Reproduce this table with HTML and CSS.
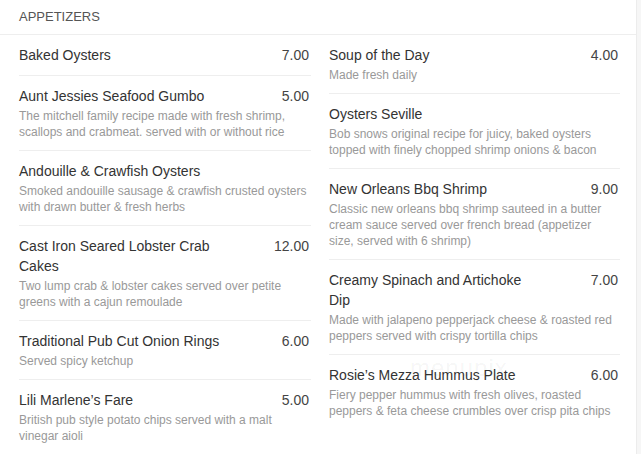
FILE: index.html
```html
<!DOCTYPE html>
<html>
<head>
<meta charset="utf-8">
<link rel="stylesheet" href="styles.css">
</head>
<body>
<div class="menu">
  <div class="section-head">APPETIZERS</div>
  <div class="cols">
    <div class="col">
      <div class="item">
        <div class="row"><div class="name">Baked Oysters</div><div class="price">7.00</div></div>
      </div>
      <div class="item">
        <div class="row"><div class="name">Aunt Jessies Seafood Gumbo</div><div class="price">5.00</div></div>
        <div class="desc">The mitchell family recipe made with fresh shrimp, scallops and crabmeat. served with or without rice</div>
      </div>
      <div class="item">
        <div class="row"><div class="name">Andouille &amp; Crawfish Oysters</div><div class="price"></div></div>
        <div class="desc">Smoked andouille sausage &amp; crawfish crusted oysters with drawn butter &amp; fresh herbs</div>
      </div>
      <div class="item">
        <div class="row"><div class="name">Cast Iron Seared Lobster Crab Cakes</div><div class="price">12.00</div></div>
        <div class="desc">Two lump crab &amp; lobster cakes served over petite greens with a cajun remoulade</div>
      </div>
      <div class="item">
        <div class="row"><div class="name">Traditional Pub Cut Onion Rings</div><div class="price">6.00</div></div>
        <div class="desc">Served spicy ketchup</div>
      </div>
      <div class="item last">
        <div class="row"><div class="name">Lili Marlene’s Fare</div><div class="price">5.00</div></div>
        <div class="desc">British pub style potato chips served with a malt vinegar aioli</div>
      </div>
    </div>
    <div class="col">
      <div class="item">
        <div class="row"><div class="name">Soup of the Day</div><div class="price">4.00</div></div>
        <div class="desc">Made fresh daily</div>
      </div>
      <div class="item">
        <div class="row"><div class="name">Oysters Seville</div><div class="price"></div></div>
        <div class="desc">Bob snows original recipe for juicy, baked oysters topped with finely chopped shrimp onions &amp; bacon</div>
      </div>
      <div class="item">
        <div class="row"><div class="name">New Orleans Bbq Shrimp</div><div class="price">9.00</div></div>
        <div class="desc">Classic new orleans bbq shrimp sauteed in a butter cream sauce served over french bread (appetizer size, served with 6 shrimp)</div>
      </div>
      <div class="item">
        <div class="row"><div class="name">Creamy Spinach and Artichoke Dip</div><div class="price">7.00</div></div>
        <div class="desc">Made with jalapeno pepperjack cheese &amp; roasted red peppers served with crispy tortilla chips</div>
      </div>
      <div class="item last">
        <div class="row"><div class="name">Rosie’s Mezza Hummus Plate</div><div class="price">6.00</div></div>
        <div class="desc">Fiery pepper hummus with fresh olives, roasted peppers &amp; feta cheese crumbles over crisp pita chips</div>
      </div>
    </div>
  </div>
  <div class="watermark">menupix</div>
</div>
</body>
</html>
```

FILE: styles.css
```css
html, body {
  margin: 0;
  padding: 0;
}
body {
  background: #f6f6f6;
  font-family: "Liberation Sans", Arial, sans-serif;
  width: 641px;
  height: 454px;
  overflow: hidden;
}
.menu {
  position: relative;
  width: 636px;
  height: 454px;
  background: #fff;
  border-right: 1px solid #ececec;
}
.section-head {
  height: 34px;
  line-height: 34px;
  padding-left: 19px;
  font-size: 13px;
  color: #555;
  border-bottom: 1px solid #eeeeee;
}
.cols {
  display: grid;
  grid-template-columns: 292px 291px;
  column-gap: 18px;
  padding: 0 16px 0 19px;
}
.item {
  padding: 10px 0;
  border-bottom: 1px solid #eeeeee;
}
.item.last {
  border-bottom: none;
}
.row {
  display: flex;
  justify-content: space-between;
  align-items: flex-start;
}
.name {
  width: 208px;
  font-size: 14px;
  line-height: 20px;
  color: #333;
}
.price {
  font-size: 14px;
  line-height: 20px;
  color: #444;
  padding-right: 2px;
}
.desc {
  margin-top: 2px;
  max-width: 288px;
  font-size: 12px;
  line-height: 16px;
  color: #999;
}
.watermark {
  position: absolute;
  left: 410px;
  top: 354px;
  font-size: 24px;
  font-weight: 300;
  letter-spacing: 1px;
  color: rgba(0, 0, 0, 0.05);
  pointer-events: none;
}
```
